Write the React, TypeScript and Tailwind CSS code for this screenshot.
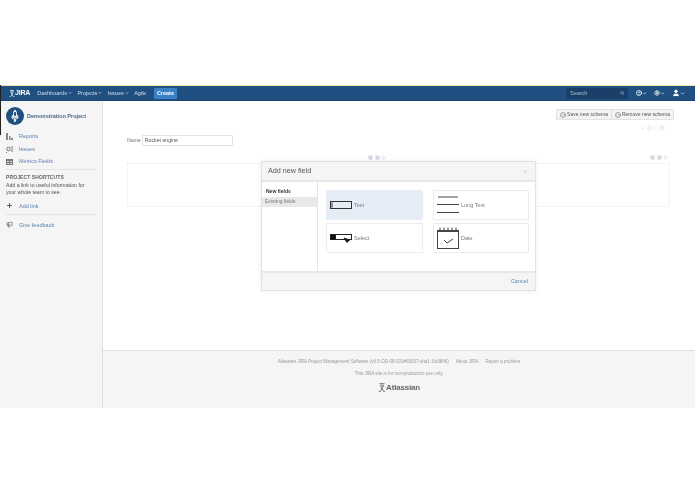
import { ChevronDown, HelpCircle, Search, Settings, User, X, Plus, Megaphone, CheckCircle2, Rocket, RotateCcw, Square } from 'lucide-react';

const font = 'font-["Liberation_Sans",Arial,sans-serif]';

function AtlassianMark({ className }: { className: string }) {
  return (
    <svg viewBox="0 0 12 14" className={className} fill="none" stroke="currentColor" strokeWidth="1.4">
      <path d="M2 1h8M3 3.500h6M3.500 4l5 9M8.500 4l-5 9M1 13.500h3M8 13.500h3" />
    </svg>
  );
}

function NavItem({ label }: { label: string }) {
  return (
    <span className="flex items-center gap-[1px] text-[5.5px] text-[#d4deea]">
      {label}
      <ChevronDown className="w-[4px] h-[4px]" strokeWidth={4} />
    </span>
  );
}

function FieldCard({ label, active, icon }: { label: string; active?: boolean; icon: React.ReactNode }) {
  return (
    <div className={`h-[30px] flex items-center gap-[2px] rounded-[1px] border pl-[3px] ${active ? 'bg-[#e6edf6] border-[#e6edf6]' : 'bg-white border-[#ececec]'}`}>
      <div className="w-[22px] flex justify-center shrink-0">{icon}</div>
      <span className="text-[5.5px] text-[#777]">{label}</span>
    </div>
  );
}

function MiniTools({ className }: { className: string }) {
  return (
    <div className={`flex gap-[1.500px] text-[#d5dbe4] ${className}`}>
      <Square className="w-[5px] h-[5px] fill-current" />
      <Square className="w-[5px] h-[5px] fill-current" />
      <Settings className="w-[5px] h-[5px]" />
    </div>
  );
}

export default function App() {
  return (
    <div className={`relative w-[695px] h-[494px] bg-white overflow-hidden blur-[0.35px] ${font}`}>
      <div className="h-[85px]" />
      <div className="h-[1px] bg-[#e8e6a8]" />
      <header className="h-[15px] bg-[#205081] flex items-center pl-[9px] pr-[10px] border-b border-[#1c4570]">
        <AtlassianMark className="w-[6px] h-[7px] text-white" />
        <span className="text-[7px] font-bold text-white tracking-tight mr-[7px]">JIRA</span>
        <div className="flex items-center gap-[5.500px]">
          <NavItem label="Dashboards" />
          <NavItem label="Projects" />
          <NavItem label="Issues" />
          <span className="text-[5.5px] text-[#d4deea]">Agile</span>
          <span className="ml-[2px] h-[11px] w-[23px] flex items-center justify-center bg-[#3b7fc4] rounded-[1px] text-[5.5px] font-bold text-white">Create</span>
        </div>
        <div className="ml-auto flex items-center">
          <div className="w-[62px] h-[11px] bg-[#1a4069] rounded-[1px] flex items-center justify-between px-[4px] text-[5.5px] text-[#a8bbd0]">
            Search
            <Search className="w-[4px] h-[4px]" strokeWidth={3} />
          </div>
          <HelpCircle className="ml-[8px] w-[6px] h-[6px] text-white" strokeWidth={3} />
          <ChevronDown className="w-[5px] h-[5px] text-white" strokeWidth={3} />
          <Settings className="ml-[7px] w-[6px] h-[6px] text-white" strokeWidth={3} />
          <ChevronDown className="w-[5px] h-[5px] text-white" strokeWidth={3} />
          <User className="ml-[7px] w-[8px] h-[8px] text-white fill-white" />
          <ChevronDown className="w-[5px] h-[5px] text-white" strokeWidth={3} />
        </div>
      </header>
      <div className="flex h-[307px]">
        <aside className="w-[103px] shrink-0 bg-[#f5f5f5] border-r border-[#e0e0e0] px-[6px] pt-[6px]">
          <div className="flex items-center gap-[3px]">
            <div className="w-[18px] h-[18px] rounded-full bg-[#205081] flex items-center justify-center">
              <Rocket className="w-[10px] h-[10px] text-white -rotate-45" strokeWidth={2.5} />
            </div>
            <span className="text-[5.5px] font-bold text-[#4a6785]">Demonstration Project</span>
          </div>
          <div className="mt-[8px] flex flex-col gap-[5.500px] text-[5.5px] text-[#5b82ad]">
            <div className="flex items-center gap-[6px] h-[7px]">
              <svg viewBox="0 0 7 7" className="w-[7px] h-[7px] fill-[#888]"><path d="M0 0h2v7H0zM3 3h1.500v4H3zM5 5h2v2H5z" /></svg>
              Reports
            </div>
            <div className="flex items-center gap-[6px] h-[7px]">
              <svg viewBox="0 0 7 7" className="w-[7px] h-[7px] fill-none stroke-[#777]"><circle cx="2.500" cy="3" r="1.800" /><path d="M1 6l-1 1M5 1h2M5.500 3h1.500M5 5h2" /></svg>
              Issues
            </div>
            <div className="flex items-center gap-[6px] h-[7px]">
              <svg viewBox="0 0 7 7" className="w-[7px] h-[7px] fill-[#777]"><path d="M0 1h7v6H0z" /><path d="M1 3h2v1H1zM4 3h2v1H4zM1 5h2v1H1zM4 5h2v1H4z" fill="#ddd" /></svg>
              Metrics Fields
            </div>
          </div>
          <div className="mt-[4px] border-t border-[#e4e4e4] pt-[4px]">
            <div className="text-[5px] font-semibold text-[#666] tracking-[0.1px]">PROJECT SHORTCUTS</div>
            <p className="text-[5.2px] leading-[7.5px] text-[#555]">Add a link to useful information for<br />your whole team to see.</p>
            <div className="mt-[5px] flex items-center gap-[6px] text-[5.5px] text-[#5b82ad]"><Plus className="w-[7px] h-[7px] text-[#444]" strokeWidth={3} />Add link</div>
          </div>
          <div className="mt-[4px] border-t border-[#e4e4e4] pt-[6px] flex items-center gap-[6px] text-[5.5px] text-[#5b82ad]">
            <Megaphone className="w-[7px] h-[7px] text-[#555]" />Give feedback
          </div>
        </aside>
        <main className="flex-1 flex flex-col pt-[8px] pl-[24px] pr-[21px]">
          <div className="flex justify-end">
            <div className="flex h-[11px] border border-[#e2e2e2] bg-[#f3f3f3] rounded-[1px] text-[5px] text-[#555]">
              <span className="flex items-center gap-[1px] px-[3px] border-r border-[#e2e2e2]"><CheckCircle2 className="w-[6px] h-[6px]" />Save new schema</span>
              <span className="flex items-center gap-[1px] px-[3px]"><CheckCircle2 className="w-[6px] h-[6px]" />Remove new schema</span>
            </div>
          </div>
          <div className="flex justify-end mt-[4px] h-[8px] items-center gap-[1px] text-[#dfe4ea] pr-[9px]">
            <Plus className="w-[5px] h-[5px]" />
            <Settings className="w-[6px] h-[6px]" />
            <RotateCcw className="w-[5px] h-[5px]" />
            <Settings className="w-[6px] h-[6px] text-[#cfd6de]" />
          </div>
          <div className="flex items-center gap-[1px] mt-[3px] h-[11px]">
            <span className="text-[5.2px] text-[#777]">Name</span>
            <div className="w-[91px] h-[11px] border border-[#e2e2e2] rounded-[1px] flex items-center pl-[2px] text-[5.2px] text-[#555]">Rocket engine</div>
          </div>
          <MiniTools className="justify-end mt-[9px] mr-[6px]" />
          <div className="mt-[3px] mr-[4px] h-[44px] border border-dotted border-[#e8e8e8] rounded-[1px]" />
        </main>
      </div>
      <footer className="absolute left-[103px] right-0 top-[350px] h-[58px] bg-[#f5f5f5] border-t border-[#e0e0e0] flex flex-col items-center pt-[8px] text-[4.5px] text-[#999]">
        <div className="flex gap-[7px]">
          <span>Atlassian JIRA Project Management Software (v6.5-OD-08-001#65007-sha1:1fc9846)</span>
          <span>About JIRA</span>
          <span>Report a problem</span>
        </div>
        <div className="mt-[5px]">This JIRA site is for non-production use only.</div>
        <div className="mt-[4px] flex items-center text-[8px] font-bold text-[#666] tracking-tight">
          <AtlassianMark className="w-[8px] h-[9px]" />Atlassian
        </div>
      </footer>
      <div className="absolute left-0 top-[85px] w-[1px] h-[50px] bg-[#222]" />
      <MiniTools className="absolute left-[368px] top-[155px]" />
      <section className="absolute left-[261px] top-[161px] w-[275px] h-[130px] border border-[#e2e2e2] bg-white flex flex-col shadow-[0_0_4px_rgba(0,0,0,0.08)]">
        <div className="h-[20px] bg-[#f5f5f5] border-b-2 border-[#e8e8e8] flex items-center justify-between pl-[6px] pr-[7px] shrink-0">
          <h2 className="text-[7.2px] text-[#555]">Add new field</h2>
          <X className="w-[5px] h-[5px] text-[#aaa]" />
        </div>
        <div className="flex flex-1 min-h-0">
          <div className="w-[56px] border-r border-[#e4e4e4] pt-[5px] text-[5px]">
            <div className="h-[10px] flex items-center pl-[4px] font-bold text-[#333]">New fields</div>
            <div className="h-[10px] flex items-center pl-[3px] bg-[#e9e9e9] text-[#777]">Existing fields</div>
          </div>
          <div className="flex-1 grid grid-cols-[97px_96px] gap-x-[10px] gap-y-[3px] pl-[8px] pt-[8px] content-start">
            <FieldCard label="Text" active icon={
              <svg viewBox="0 0 22 8" className="w-[22px] h-[8px] fill-none stroke-[#333]"><rect x="0.5" y="0.5" width="21" height="7" /><path d="M2 1.500v5" /></svg>
            } />
            <FieldCard label="Long Text" icon={
              <svg viewBox="0 0 22 18" className="w-[22px] h-[18px] stroke-[#444]"><path d="M1 1h20M0 8.500h22M0 16.500h22" /></svg>
            } />
            <FieldCard label="Select" icon={
              <svg viewBox="0 0 22 10" className="w-[22px] h-[10px] fill-none stroke-[#222]"><rect x="0.5" y="1.500" width="21" height="5" /><rect x="0.5" y="1.500" width="5" height="5" fill="#111" /><path d="M14 5l3 4.500 2.500-2.500z" fill="#111" /></svg>
            } />
            <FieldCard label="Date" icon={
              <svg viewBox="0 0 22 22" className="w-[22px] h-[22px] fill-none stroke-[#444]"><rect x="0.5" y="3.500" width="21" height="18" /><path d="M0 4.500h22M3 0.500v4M7 0.500v4M11 0.500v4M15 0.500v4M19 0.500v4M7 13l3 3 6-4" /></svg>
            } />
          </div>
        </div>
        <div className="h-[19px] bg-[#f5f5f5] border-t-2 border-[#e8e8e8] flex items-center justify-end pr-[7px] text-[5.5px] text-[#5b82ad] shrink-0">Cancel</div>
      </section>
    </div>
  );
}
